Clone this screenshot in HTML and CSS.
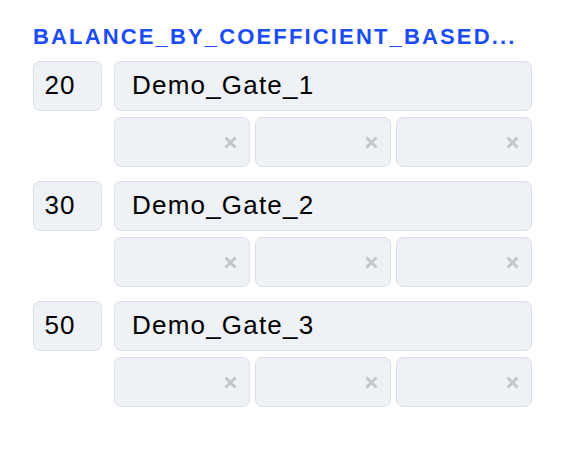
FILE: index.html
```html
<!DOCTYPE html>
<html>
<head>
<meta charset="utf-8">
<link rel="stylesheet" href="styles.css">
</head>
<body>
<div class="panel">
  <div class="title">BALANCE_BY_COEFFICIENT_BASED...</div>
  <div class="rows">
    <div class="row">
      <div class="num box">20</div>
      <div class="main">
        <div class="name box">Demo_Gate_1</div>
        <div class="subs">
          <div class="sub box"><svg class="x" viewBox="0 0 13 13"><path d="M1.5 1.5L11.5 11.5M11.5 1.5L1.5 11.5"/></svg></div>
          <div class="sub box"><svg class="x" viewBox="0 0 13 13"><path d="M1.5 1.5L11.5 11.5M11.5 1.5L1.5 11.5"/></svg></div>
          <div class="sub box"><svg class="x" viewBox="0 0 13 13"><path d="M1.5 1.5L11.5 11.5M11.5 1.5L1.5 11.5"/></svg></div>
        </div>
      </div>
    </div>
    <div class="row">
      <div class="num box">30</div>
      <div class="main">
        <div class="name box">Demo_Gate_2</div>
        <div class="subs">
          <div class="sub box"><svg class="x" viewBox="0 0 13 13"><path d="M1.5 1.5L11.5 11.5M11.5 1.5L1.5 11.5"/></svg></div>
          <div class="sub box"><svg class="x" viewBox="0 0 13 13"><path d="M1.5 1.5L11.5 11.5M11.5 1.5L1.5 11.5"/></svg></div>
          <div class="sub box"><svg class="x" viewBox="0 0 13 13"><path d="M1.5 1.5L11.5 11.5M11.5 1.5L1.5 11.5"/></svg></div>
        </div>
      </div>
    </div>
    <div class="row">
      <div class="num box">50</div>
      <div class="main">
        <div class="name box">Demo_Gate_3</div>
        <div class="subs">
          <div class="sub box"><svg class="x" viewBox="0 0 13 13"><path d="M1.5 1.5L11.5 11.5M11.5 1.5L1.5 11.5"/></svg></div>
          <div class="sub box"><svg class="x" viewBox="0 0 13 13"><path d="M1.5 1.5L11.5 11.5M11.5 1.5L1.5 11.5"/></svg></div>
          <div class="sub box"><svg class="x" viewBox="0 0 13 13"><path d="M1.5 1.5L11.5 11.5M11.5 1.5L1.5 11.5"/></svg></div>
        </div>
      </div>
    </div>
  </div>
</div>
</body>
</html>
```

FILE: styles.css
```css
html, body {
  margin: 0;
  padding: 0;
  background: #ffffff;
}
body {
  font-family: "Liberation Sans", Arial, sans-serif;
}
.panel {
  padding: 25px 48px 0 33px;
}
.title {
  color: #1a4cf7;
  font-weight: bold;
  font-size: 22px;
  letter-spacing: 2.15px;
  line-height: 24px;
  height: 24px;
  white-space: nowrap;
}
.rows {
  margin-top: 12px;
  display: flex;
  flex-direction: column;
  gap: 14px;
}
.row {
  display: flex;
  gap: 12px;
  align-items: flex-start;
}
.box {
  box-sizing: border-box;
  background: #eef1f6;
  border: 1.5px solid #dce1e9;
  border-radius: 7px;
}
.num {
  width: 69px;
  height: 50px;
  font-size: 26px;
  letter-spacing: 1px;
  line-height: 47px;
  padding-left: 10.5px;
  color: #000;
}
.main {
  flex: 1;
  display: flex;
  flex-direction: column;
  gap: 6px;
}
.name {
  height: 50px;
  font-size: 26px;
  letter-spacing: 1.2px;
  line-height: 47px;
  padding-left: 17px;
  color: #000;
  white-space: nowrap;
}
.subs {
  display: flex;
  gap: 5px;
}
.sub {
  flex: 1;
  height: 50px;
  display: flex;
  align-items: center;
  justify-content: flex-end;
  padding-right: 12px;
}
.x {
  width: 13px;
  height: 13px;
  stroke: #c4c6c9;
  stroke-width: 3;
  fill: none;
}
```
